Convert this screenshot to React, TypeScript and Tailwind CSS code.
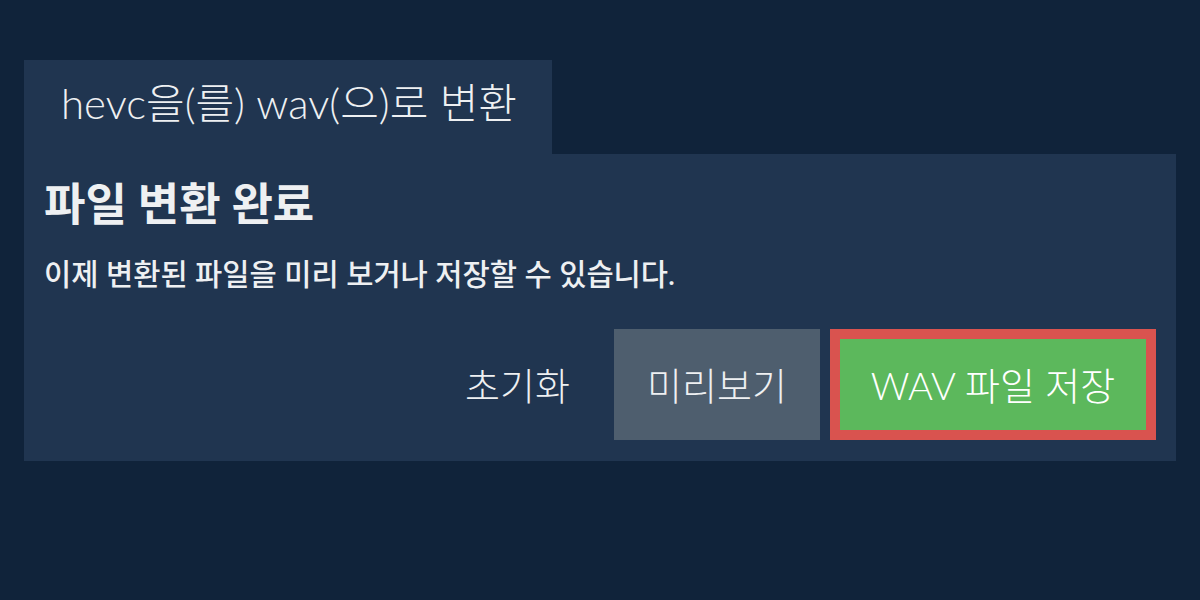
import React from "react";

export default function App() {
  const ko = { fontFamily: '"Lato", "Noto Sans CJK KR", sans-serif' };
  return (
    <div className="w-[1200px] h-[600px] bg-[#10233a] pt-[60px] px-[24px]" style={ko}>
      <div className="w-[528px] h-[94px] bg-[#203550] flex items-center pl-[37px] pb-[8px]">
        <span className="text-[42px] font-light text-[#eef0f2] leading-none">hevc을(를) wav(으)로 변환</span>
      </div>
      <div className="h-[307px] bg-[#203550] px-[20px] pt-[24px] pb-[21px] flex flex-col">
        <h1 className="text-[45px] font-bold text-[#eef0f2] leading-[52px]">파일 변환 완료</h1>
        <p className="mt-[26px] text-[29.6px] font-medium text-[#eef0f2] leading-[36px]">
          이제 변환된 파일을 미리 보거나 저장할 수 있습니다.
        </p>
        <div className="mt-auto flex justify-end items-center gap-[10px]">
          <button className="h-[111px] px-[34px] text-[38px] font-light text-[#eef0f2] leading-none">초기화</button>
          <button className="h-[111px] w-[206px] bg-[#4e5e6e] text-[38px] font-light text-[#eef0f2] leading-none">미리보기</button>
          <button className="h-[111px] w-[326px] bg-[#5cb85c] border-[10px] border-[#d9534f] text-[38px] font-light text-[#ffffff] leading-none">WAV 파일 저장</button>
        </div>
      </div>
    </div>
  );
}
